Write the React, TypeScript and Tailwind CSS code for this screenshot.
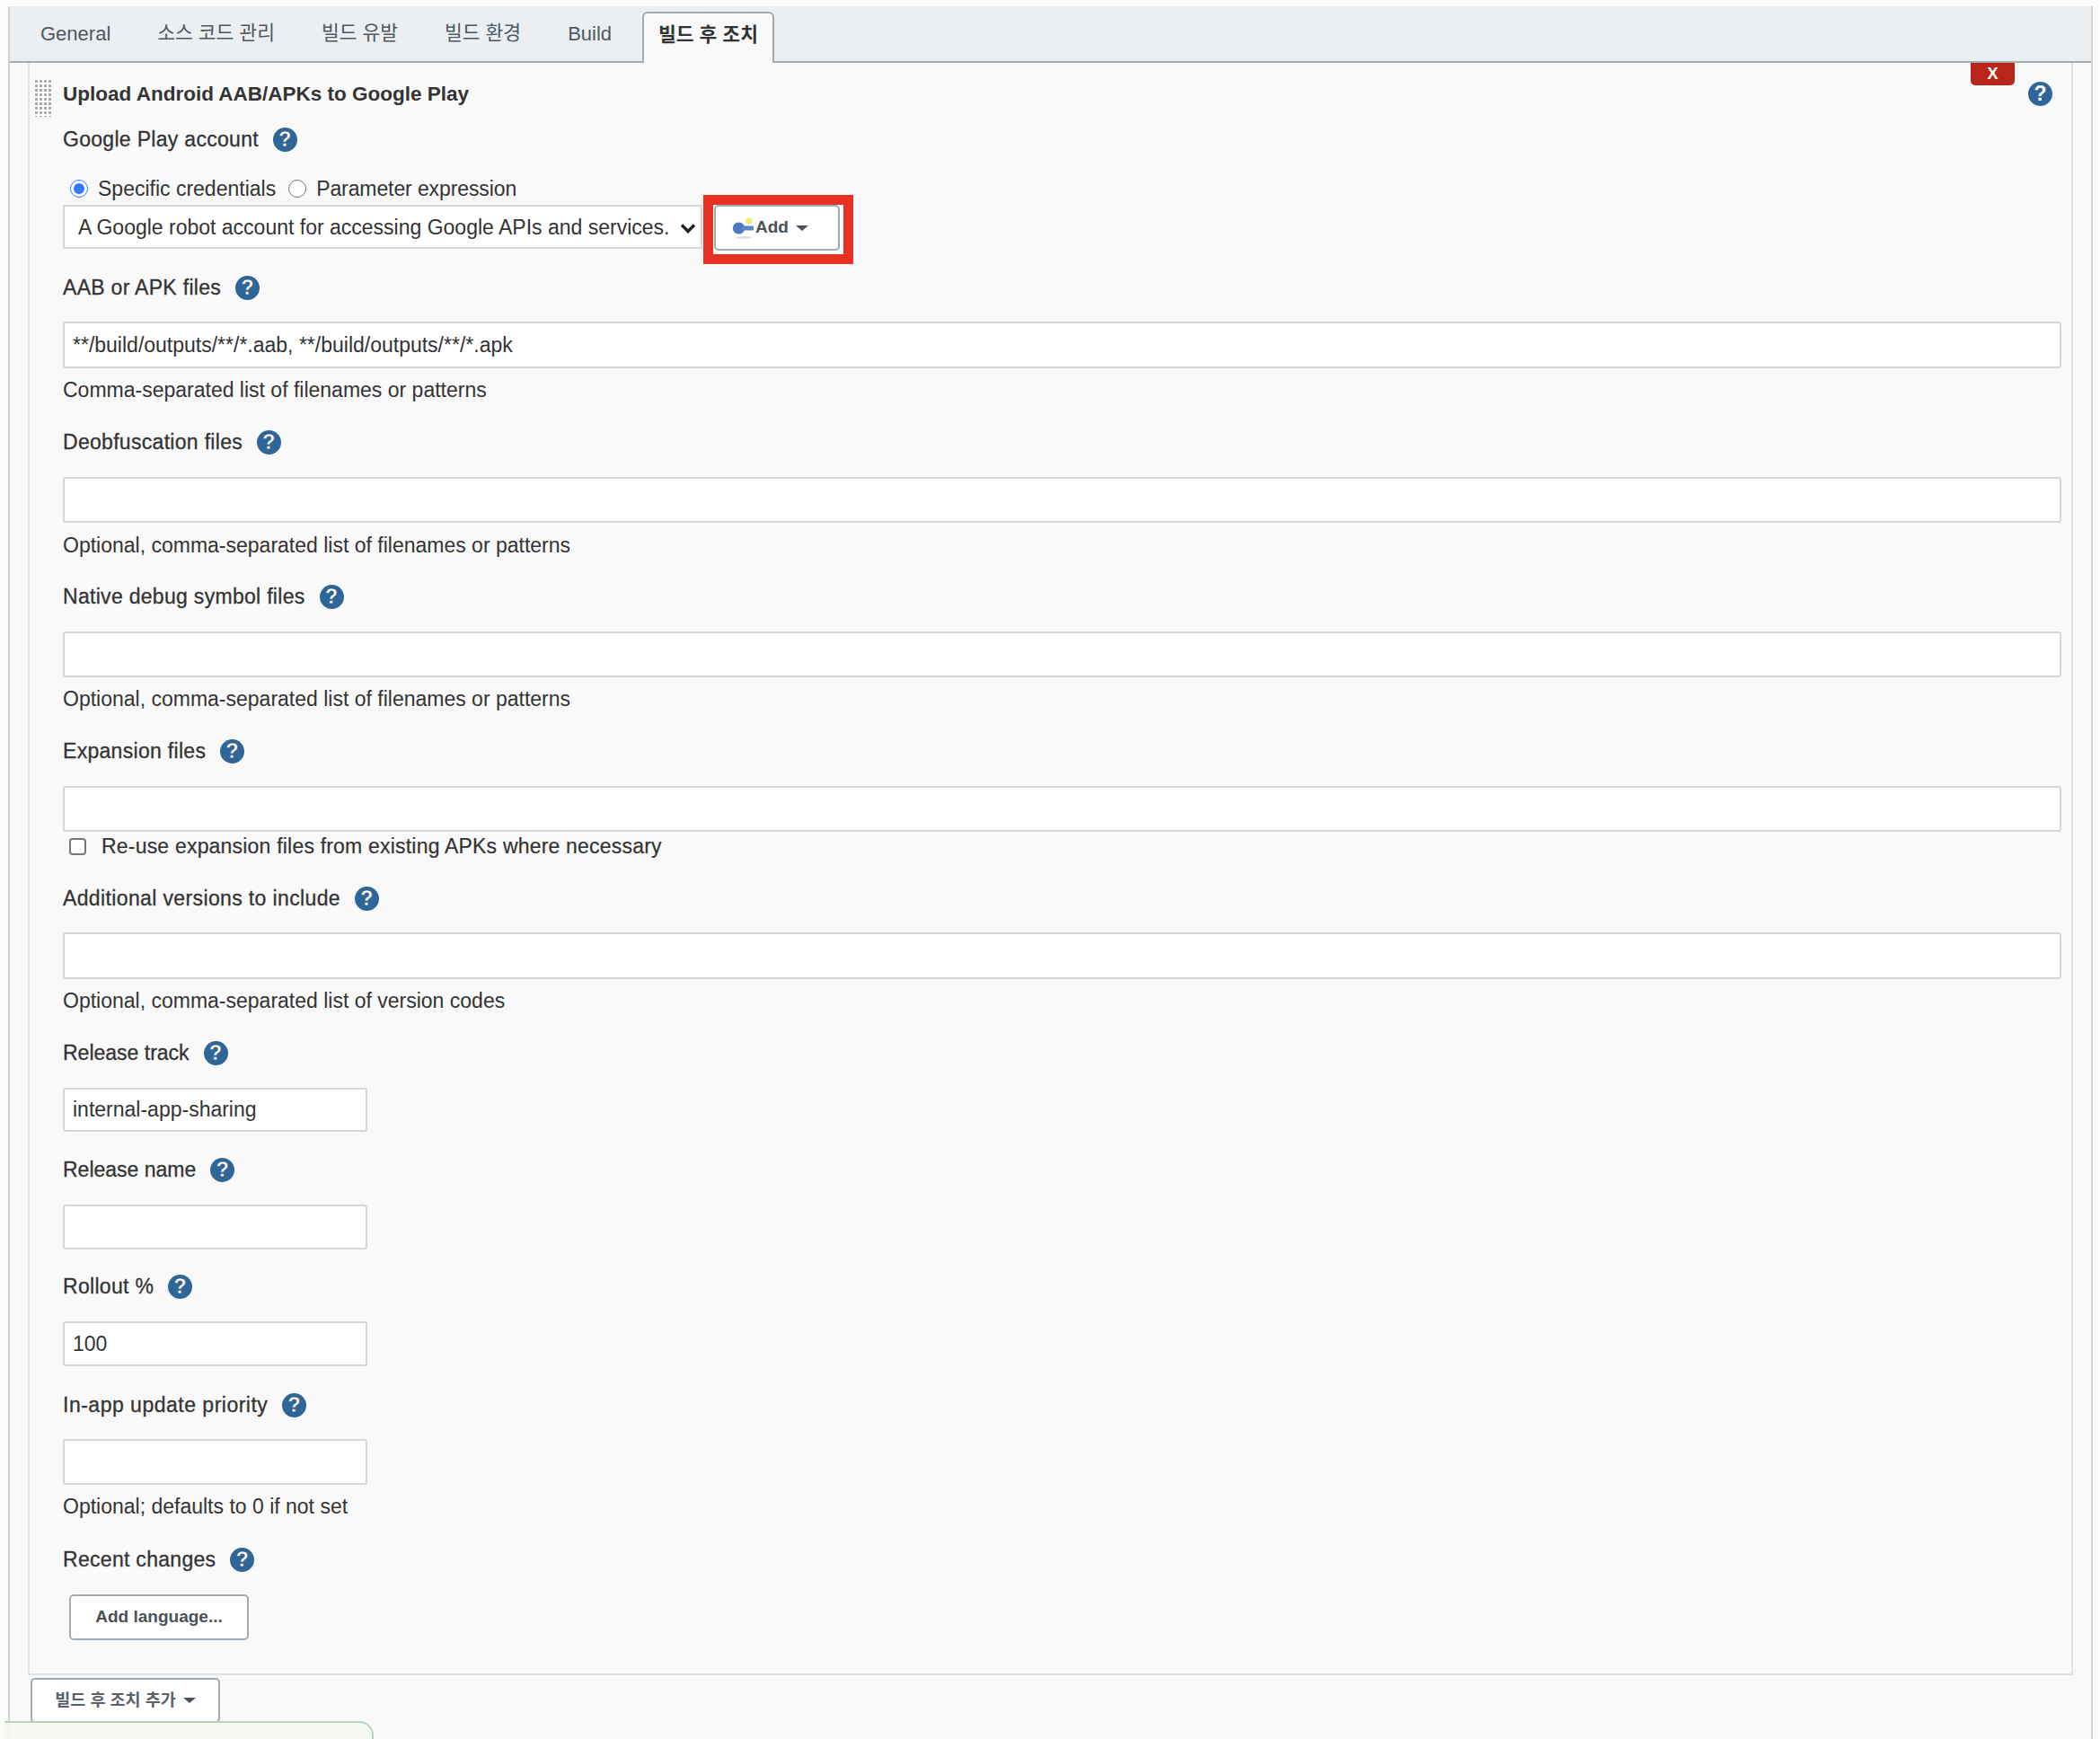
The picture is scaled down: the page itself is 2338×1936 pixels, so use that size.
import React from 'react';

const FONT = "font-['Liberation_Sans','Noto_Sans_CJK_KR',sans-serif]";

const HelpIcon = () => (
    <span className="ml-[16px] flex h-[27px] w-[27px] shrink-0 items-center justify-center rounded-full bg-[#2e6699] text-[23px] font-bold leading-none text-white">
        ?
    </span>
);

const Label = ({ text, className = '', tracking = 'tracking-[0.3px]' }: { text: string; className?: string; tracking?: string }) => (
    <div className={`flex h-[32px] items-center text-[23px] text-[#333] [-webkit-text-stroke:0.3px_#333] ${tracking} ${className}`}>
        <span>{text}</span>
        <HelpIcon />
    </div>
);

const Hint = ({ text, className = 'mt-[12px]' }: { text: string; className?: string }) => (
    <div className={`flex h-[24px] items-center text-[23px] text-[#333] ${className}`}>{text}</div>
);

const TextBox = ({ value = '', className = '' }: { value?: string; className?: string }) => (
    <input
        readOnly
        value={value}
        className={`block rounded-[3px] border-2 border-[#d6d6d6] bg-white px-[9px] text-[23px] text-[#333] outline-none ${className}`}
    />
);

const Caret = ({ className = '' }: { className?: string }) => (
    <span className={`inline-block border-x-[7px] border-t-[6px] border-x-transparent border-t-[#4a5058] ${className}`} />
);

const KeyIcon = () => (
    <svg width="24" height="26" viewBox="0 0 24 26" className="shrink-0">
        <ellipse cx="12" cy="23.5" rx="9" ry="1.5" fill="#dedede" />
        <circle cx="18" cy="5" r="3.6" fill="#f4ea6a" />
        <circle cx="6.5" cy="13" r="6.6" fill="#4f79bd" />
        <rect x="10" y="10.5" width="13" height="5" rx="1" fill="#5d86c6" />
    </svg>
);

const tabs = [
    { name: 'General', size: 'text-[22px]' },
    { name: '소스 코드 관리', size: 'text-[21.5px]' },
    { name: '빌드 유발', size: 'text-[21.5px]' },
    { name: '빌드 환경', size: 'text-[21.5px]' },
    { name: 'Build', size: 'text-[22px]' },
];

export default function App() {
    return (
        <div className={`relative h-[1936px] w-[2338px] overflow-hidden bg-[#fbfbfb] pl-[9px] pt-[7px] ${FONT}`}>
            <div className="h-[1929px] w-[2321px] border-x-2 border-[#d2d2d2] bg-[#f9f9f9]">
                {/* tab strip */}
                <div className="flex h-[63px] items-end border-b-2 border-[#a1abb3] bg-[#ebeff2] pl-[34px]">
                    <div className="flex h-[61px] items-center gap-[52px] text-[#4d5761]">
                        {tabs.map((tab) => (
                            <span key={tab.name} className={tab.size}>{tab.name}</span>
                        ))}
                    </div>
                    <div className="relative top-[2px] ml-[34px] flex h-[57px] items-center rounded-t-[6px] border-x-2 border-t-2 border-[#a1abb3] bg-[#f9f9f9] px-[16px] pb-[6px] text-[21.5px] font-bold text-[#333]">
                        빌드 후 조치
                    </div>
                </div>

                {/* post build step */}
                <div className="relative ml-[20px] h-[1795px] w-[2277px] border-x-2 border-b-2 border-[#e2e2e2] pl-[37px] pt-[19px]">
                    <div className="absolute left-[5px] top-[18px] h-[42px] w-[19px] bg-white bg-[radial-gradient(#a9a9a9_1.4px,transparent_1.8px)] bg-[length:5px_5px]" />
                    <div className="absolute right-[63px] top-0 flex h-[25px] w-[49px] items-center justify-center rounded-b-[5px] bg-[#b8261a] text-[18px] font-bold text-white">
                        X
                    </div>
                    <div className="absolute right-[21px] top-[21px]">
                        <HelpIcon />
                    </div>

                    <div className="flex h-[32px] items-center text-[22.5px] font-bold text-[#333]">
                        Upload Android AAB/APKs to Google Play
                    </div>

                    <Label text="Google Play account" className="mt-[18px]" />
                    <div className="mt-[23px] flex h-[32px] items-center pl-[8px] text-[23px] text-[#333]">
                        <input type="radio" checked readOnly className="m-0 h-[20px] w-[20px] accent-[#3478f6]" />
                        <span className="ml-[11px]">Specific credentials</span>
                        <input type="radio" readOnly checked={false} className="m-0 ml-[14px] h-[20px] w-[20px]" />
                        <span className="ml-[11px] tracking-[-0.1px]">Parameter expression</span>
                    </div>
                    <div className="relative mt-[2px] flex h-[49px] items-start">
                        <div className="flex h-[49px] w-[712px] items-center justify-between border-2 border-[#d6d6d6] bg-white pl-[15px] pr-[5px] pt-[2px] text-[23px] text-[#333]">
                            <span>A Google robot account for accessing Google APIs and services.</span>
                            <svg width="18" height="12" viewBox="0 0 18 12" className="shrink-0">
                                <path d="M2 2.5 9 9.5 16 2.5" fill="none" stroke="#222" strokeWidth="3.4" />
                            </svg>
                        </div>
                        {/* red annotation box from the original screenshot */}
                        <div className="ml-px mt-[-11px] h-[77px] w-[167px] border-[11px] border-[#e83023] bg-white">
                            <div className="ml-px flex h-[51px] w-[140px] items-center rounded-[5px] border-2 border-[#a1abb3] bg-white pl-[19px] text-[19px] font-bold text-[#4a5058]">
                                <KeyIcon />
                                <span className="ml-[1px]">Add</span>
                                <Caret className="ml-[8px]" />
                            </div>
                        </div>
                    </div>

                    <Label text="AAB or APK files" className="mt-[27px]" />
                    <TextBox value="**/build/outputs/**/*.aab, **/build/outputs/**/*.apk" className="mt-[22px] h-[52px] w-[2225px]" />
                    <Hint text="Comma-separated list of filenames or patterns" />

                    <Label text="Deobfuscation files" className="mt-[30px]" />
                    <TextBox className="mt-[23px] h-[51px] w-[2225px]" />
                    <Hint text="Optional, comma-separated list of filenames or patterns" className="mt-[13px]" />

                    <Label text="Native debug symbol files" className="mt-[29px]" />
                    <TextBox className="mt-[23px] h-[51px] w-[2225px]" />
                    <Hint text="Optional, comma-separated list of filenames or patterns" />

                    <Label text="Expansion files" className="mt-[30px]" />
                    <TextBox className="mt-[23px] h-[51px] w-[2225px]" />
                    <div className="mt-[4px] flex h-[24px] items-center pl-[7px] text-[23px] tracking-[0.2px] text-[#333] [-webkit-text-stroke:0.2px_#333]">
                        <input type="checkbox" readOnly className="m-0 h-[19px] w-[19px] appearance-none rounded-[4px] border-2 border-[#767676] bg-white" />
                        <span className="ml-[17px]">Re-use expansion files from existing APKs where necessary</span>
                    </div>

                    <Label text="Additional versions to include" className="mt-[30px]" tracking="tracking-[0.37px]" />
                    <TextBox className="mt-[22px] h-[52px] w-[2225px]" />
                    <Hint text="Optional, comma-separated list of version codes" />

                    <Label text="Release track" className="mt-[30px]" tracking="tracking-[0px]" />
                    <TextBox value="internal-app-sharing" className="mt-[23px] h-[49px] w-[339px]" />

                    <Label text="Release name" className="mt-[26px]" tracking="tracking-[0px]" />
                    <TextBox className="mt-[23px] h-[50px] w-[339px]" />

                    <Label text="Rollout %" className="mt-[25px]" />
                    <TextBox value="100" className="mt-[23px] h-[50px] w-[339px]" />

                    <Label text="In-app update priority" className="mt-[27px]" tracking="tracking-[0.5px]" />
                    <TextBox className="mt-[22px] h-[51px] w-[339px]" />
                    <Hint text="Optional; defaults to 0 if not set" />

                    <Label text="Recent changes" className="mt-[31px]" />
                    <button className="ml-[7px] mt-[23px] flex h-[51px] w-[200px] items-center justify-center rounded-[5px] border-2 border-[#a1abb3] bg-white text-[19px] font-bold text-[#4a5058]">
                        Add language...
                    </button>
                </div>

                <button className="ml-[23px] mt-[3px] flex h-[50px] w-[211px] items-center justify-center rounded-[5px] border-2 border-[#a1abb3] bg-white text-[18.5px] font-bold text-[#5a6068]">
                    빌드 후 조치 추가
                    <Caret className="ml-[8px]" />
                </button>
            </div>

            {/* footer panel peeking in at the bottom edge */}
            <div className="absolute left-[5px] top-[1916px] h-[40px] w-[411px] rounded-tr-[16px] border-r-2 border-t-2 border-[#b7d3bb] bg-[#f5f7f1]/90" />
        </div>
    );
}
